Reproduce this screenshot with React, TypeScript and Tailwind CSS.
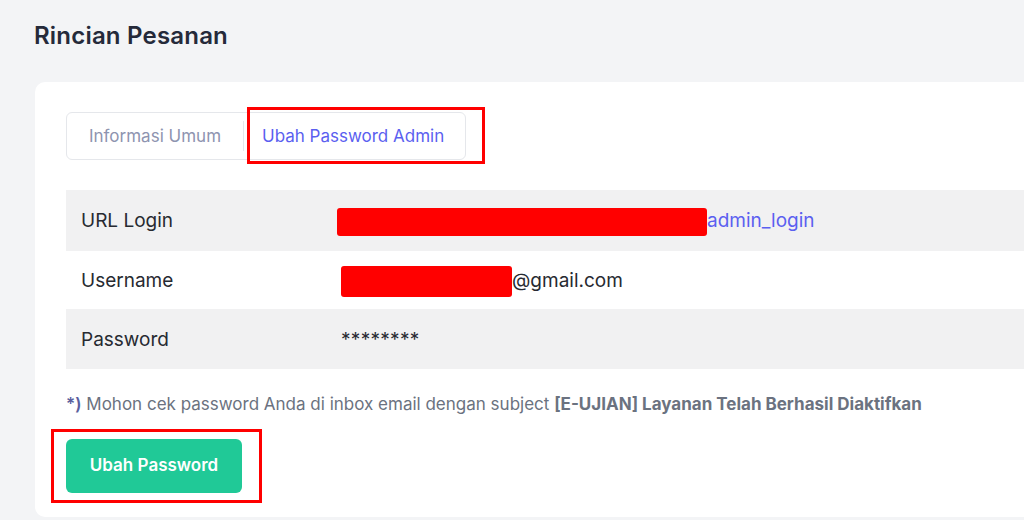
import React from "react";

const rows = [
  { label: "URL Login", kind: "url" },
  { label: "Username", kind: "user" },
  { label: "Password", kind: "pass" },
];

function Redacted({ w }: { w: string }) {
  return <span className={`inline-block h-[28px] rounded-[3px] bg-[#ff0000] ${w}`} />;
}

export default function App() {
  return (
    <div
      className="h-[520px] w-[1024px] overflow-hidden bg-[#f3f4f6] pl-[35px] pt-[20px]"
      style={{ fontFamily: "Inter, 'Noto Sans', sans-serif" }}
    >
      <h1 className="-ml-[1px] h-[32px] text-[24px] leading-[32px] font-semibold tracking-[0.2px] text-[#252a3a]">
        Rincian Pesanan
      </h1>

      <div className="mt-[30px] mr-[-40px] h-[435px] rounded-[10px] bg-white pl-[31px] pt-[30px]">
        {/* tabs */}
        <div className="relative flex h-[48px] w-[400px] items-center rounded-[6px] border border-[#e5e7eb]">
          <button className="h-full w-[176px] pt-[2px] text-[17px] text-[#8e94b0]">Informasi Umum</button>
          <span className="h-[30px] w-px bg-[#e5e7eb]" />
          <button className="h-full pl-[18px] pt-[2px] text-[17px] text-[#5b5ff0]">Ubah Password Admin</button>
          <span className="pointer-events-none absolute left-[180px] top-[-6px] h-[57px] w-[238px] border-[3px] border-[#ff0000]" />
        </div>

        {/* detail table */}
        <div className="mt-[30px] flex flex-col text-[19px] text-[#272a31]">
          {rows.map((r, i) => (
            <div
              key={r.label}
              className={`flex items-center pt-[2px] ${
                i === 1 ? "h-[58px] bg-white" : i === 0 ? "h-[61px] bg-[#f1f1f2]" : "h-[60px] bg-[#f1f1f2]"
              }`}
            >
              <div className="w-[271px] pl-[15px]">{r.label}</div>
              {r.kind === "url" && (
                <div className="flex items-center">
                  <Redacted w="w-[370px]" />
                  <span className="text-[#5b5ff0]">admin_login</span>
                </div>
              )}
              {r.kind === "user" && (
                <div className="flex items-center pl-[4px]">
                  <span className="inline-block h-[31px] w-[171px] rounded-[3px] bg-[#ff0000]" />
                  <span>@gmail.com</span>
                </div>
              )}
              {r.kind === "pass" && <div className="pl-[4px] tracking-[0.3px]">********</div>}
            </div>
          ))}
        </div>

        <p className="mt-[23px] text-[17px] text-[#6b7280]">
          <span className="font-semibold text-[#5b5f9e]">*)</span> Mohon cek password Anda di inbox email dengan subject{" "}
          <span className="font-bold">[E-UJIAN] Layanan Telah Berhasil Diaktifkan</span>
        </p>

        <div className="relative mt-[21px] w-fit">
          <button className="h-[54px] w-[176px] rounded-[6px] bg-[#20c997] text-[17px] font-semibold text-white">
            Ubah Password
          </button>
          <span className="pointer-events-none absolute left-[-15px] top-[-10px] h-[74px] w-[211px] border-[3px] border-[#ff0000]" />
        </div>
      </div>
    </div>
  );
}
